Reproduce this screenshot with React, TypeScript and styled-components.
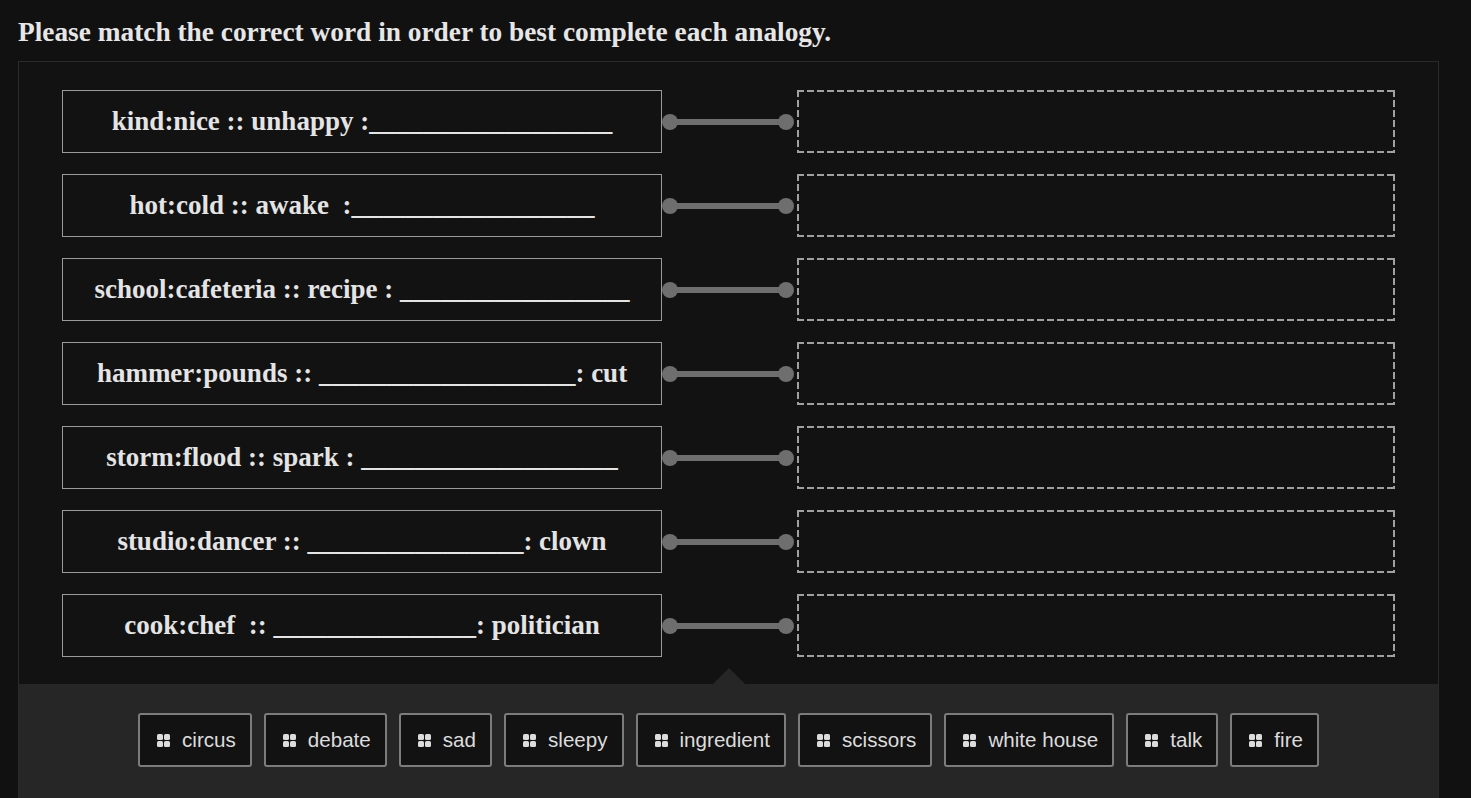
import React from "react";
import styled, { createGlobalStyle } from "styled-components";

const GlobalStyle = createGlobalStyle`
  html, body {
    margin: 0;
    padding: 0;
    background: #111111;
  }
  body {
    font-family: "Liberation Serif", "Times New Roman", serif;
    color: #e4e4e4;
    overflow: hidden;
  }
`;

const Page = styled.div`
  padding: 17px 32px 0 18px;
`;

const Title = styled.h1`
  margin: 0 0 14px;
  font-size: 27.35px;
  line-height: 30px;
  font-weight: bold;
  color: #e6e6e6;
  white-space: nowrap;
`;

const Panel = styled.div`
  border: 1px solid #2a2a2a;
  background: #121212;
`;

const Rows = styled.div`
  display: flex;
  flex-direction: column;
  gap: 21px;
  padding: 28px 43px 27px;
`;

const Row = styled.div`
  display: grid;
  grid-template-columns: 600px 135px 1fr;
  align-items: center;
  height: 63px;
`;

const Prompt = styled.div`
  height: 63px;
  box-sizing: border-box;
  border: 1px solid #9a9a9a;
  display: flex;
  align-items: center;
  justify-content: center;
  font-size: 27px;
  font-weight: bold;
  white-space: pre;
  color: #e4e4e4;
`;

const Connector = styled.div`
  position: relative;
  height: 16px;
  display: flex;
  align-items: center;
  padding: 0 11px 0 8px;
`;

const Line = styled.div`
  flex: 1;
  height: 6px;
  background: #6e6e6e;
`;

const Dot = styled.span<{ $side: "left" | "right" }>`
  position: absolute;
  top: 0;
  ${(p) => (p.$side === "left" ? "left: 0;" : "right: 3px;")}
  width: 16px;
  height: 16px;
  border-radius: 50%;
  background: #6e6e6e;
`;

const dash = "#a0a0a0";

const DropZone = styled.div`
  height: 63px;
  box-sizing: border-box;
  background:
    linear-gradient(to right, ${dash} 7px, transparent 7px) top left / 10px 2px repeat-x,
    linear-gradient(to right, ${dash} 7px, transparent 7px) bottom left / 10px 2px repeat-x,
    linear-gradient(to bottom, ${dash} 7px, transparent 7px) top left / 2px 10px repeat-y,
    linear-gradient(to bottom, ${dash} 7px, transparent 7px) top right / 2px 10px repeat-y;
`;

const Tray = styled.div`
  position: relative;
  background: #262626;
  padding: 29px 20px 40px;
  display: flex;
  justify-content: center;
  gap: 12px;

  &::before {
    content: "";
    position: absolute;
    top: -16px;
    left: 50%;
    margin-left: -16px;
    border-left: 16px solid transparent;
    border-right: 16px solid transparent;
    border-bottom: 16px solid #262626;
  }
`;

const Chip = styled.div`
  display: flex;
  align-items: center;
  gap: 12px;
  height: 54px;
  box-sizing: border-box;
  padding: 0 14px 0 17px;
  background: #121212;
  border: 2px solid #7c7c7c;
  border-radius: 3px;
  font-family: "Liberation Sans", Arial, sans-serif;
  font-size: 20.6px;
  color: #dcdcdc;
`;

const Grip = styled.span`
  display: grid;
  grid-template-columns: 6px 6px;
  grid-template-rows: 6px 6px;
  gap: 1px;

  i {
    display: block;
    background: #dcdcdc;
    border-radius: 1.5px;
  }
`;

const prompts = [
  "kind:nice :: unhappy :__________________",
  "hot:cold :: awake  :__________________",
  "school:cafeteria :: recipe : _________________",
  "hammer:pounds :: ___________________: cut",
  "storm:flood :: spark : ___________________",
  "studio:dancer :: ________________: clown",
  "cook:chef  :: _______________: politician",
];

const words = [
  "circus",
  "debate",
  "sad",
  "sleepy",
  "ingredient",
  "scissors",
  "white house",
  "talk",
  "fire",
];

export default function App() {
  return (
    <Page>
      <GlobalStyle />
      <Title>Please match the correct word in order to best complete each analogy.</Title>
      <Panel>
        <Rows>
          {prompts.map((p) => (
            <Row key={p}>
              <Prompt>{p}</Prompt>
              <Connector>
                <Dot $side="left" />
                <Line />
                <Dot $side="right" />
              </Connector>
              <DropZone />
            </Row>
          ))}
        </Rows>
        <Tray>
          {words.map((w) => (
            <Chip key={w}>
              <Grip>
                <i />
                <i />
                <i />
                <i />
              </Grip>
              {w}
            </Chip>
          ))}
        </Tray>
      </Panel>
    </Page>
  );
}
